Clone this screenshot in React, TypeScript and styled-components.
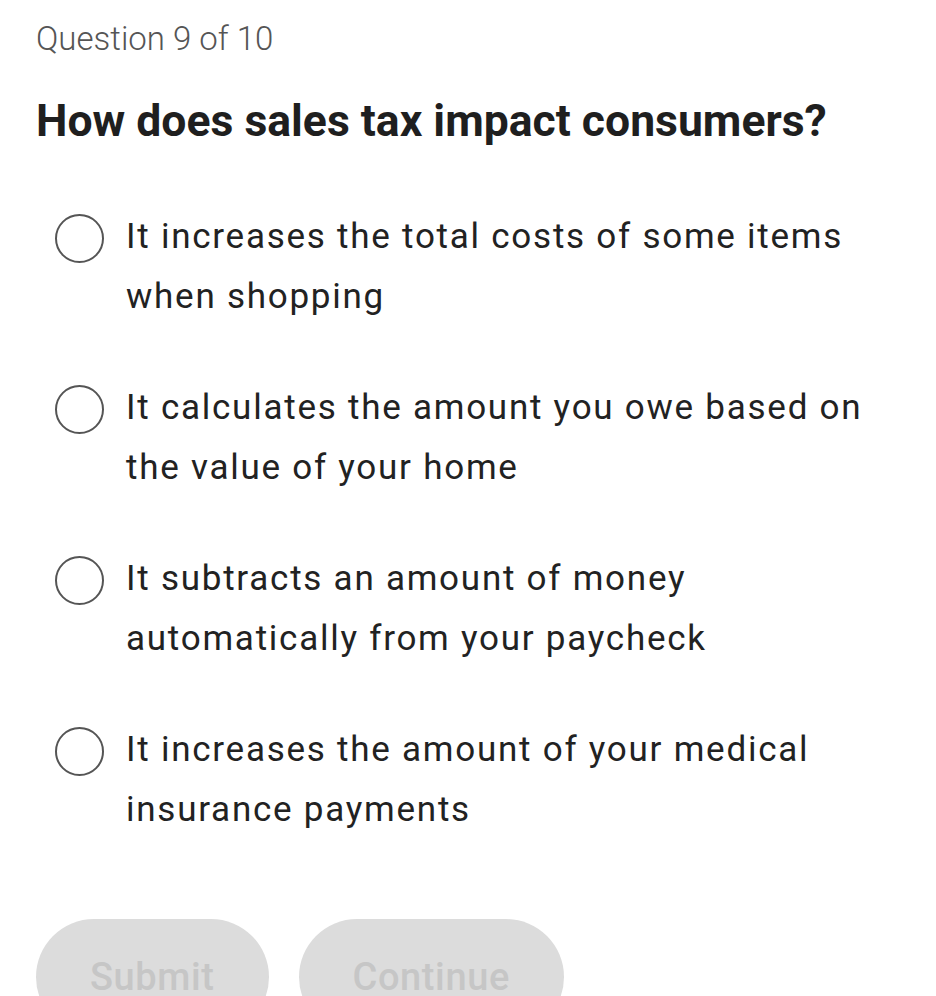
import React from 'react';
import styled, { createGlobalStyle } from 'styled-components';

const GlobalStyle = createGlobalStyle`
  html, body {
    margin: 0;
    padding: 0;
    background: #ffffff;
  }
  body {
    font-family: Roboto, "Liberation Sans", sans-serif;
    -webkit-font-smoothing: antialiased;
  }
`;

const Page = styled.main`
  display: flex;
  flex-direction: column;
  padding: 19px 36px 0 36px;
  height: 996px;
  box-sizing: border-box;
  overflow: hidden;
`;

const Progress = styled.div`
  font-size: 33px;
  line-height: 40px;
  font-weight: 300;
  color: #555555;
`;

const Prompt = styled.h1`
  margin: 36px 0 0 0;
  font-size: 44.5px;
  line-height: 52px;
  font-weight: 700;
  color: #1f1f1f;
`;

const Options = styled.ul`
  list-style: none;
  margin: 60px 0 0 0;
  padding: 0;
  display: flex;
  flex-direction: column;
  gap: 51px;
`;

const Option = styled.li`
  display: flex;
  align-items: flex-start;
  gap: 22px;
  padding-left: 19px;
  cursor: pointer;
`;

const Radio = styled.span<{ $checked?: boolean }>`
  flex: none;
  width: 49px;
  height: 49px;
  margin-top: 7px;
  box-sizing: border-box;
  border-radius: 50%;
  border: 2.5px solid #555555;
  background: ${({ $checked }) => ($checked ? '#555555' : 'transparent')};
`;

const OptionText = styled.span`
  font-size: 35px;
  line-height: 60px;
  font-weight: 400;
  letter-spacing: 1.75px;
  color: #222222;
  max-width: 760px;
`;

const Actions = styled.div`
  display: flex;
  gap: 30px;
  margin-top: 79px;
`;

const ActionButton = styled.button`
  height: 116px;
  padding: 0 54px;
  border: none;
  border-radius: 58px;
  background: #dcdcdc;
  color: #c6c6c6;
  font-family: Roboto, "Liberation Sans", sans-serif;
  font-size: 38px;
  font-weight: 500;
  letter-spacing: 0.6px;
  cursor: not-allowed;
`;

const answers = [
  'It increases the total costs of some items when shopping',
  'It calculates the amount you owe based on the value of your home',
  'It subtracts an amount of money automatically from your paycheck',
  'It increases the amount of your medical insurance payments',
];

const App: React.FC = () => {
  const [picked, setPicked] = React.useState<number | null>(null);
  return (
    <>
      <GlobalStyle />
      <Page>
        <Progress>Question 9 of 10</Progress>
        <Prompt>How does sales tax impact consumers?</Prompt>
        <Options>
          {answers.map((text, i) => (
            <Option key={i} onClick={() => setPicked(i)}>
              <Radio $checked={picked === i} />
              <OptionText>{text}</OptionText>
            </Option>
          ))}
        </Options>
        <Actions>
          <ActionButton disabled={picked === null}>Submit</ActionButton>
          <ActionButton disabled>Continue</ActionButton>
        </Actions>
      </Page>
    </>
  );
};

export default App;
